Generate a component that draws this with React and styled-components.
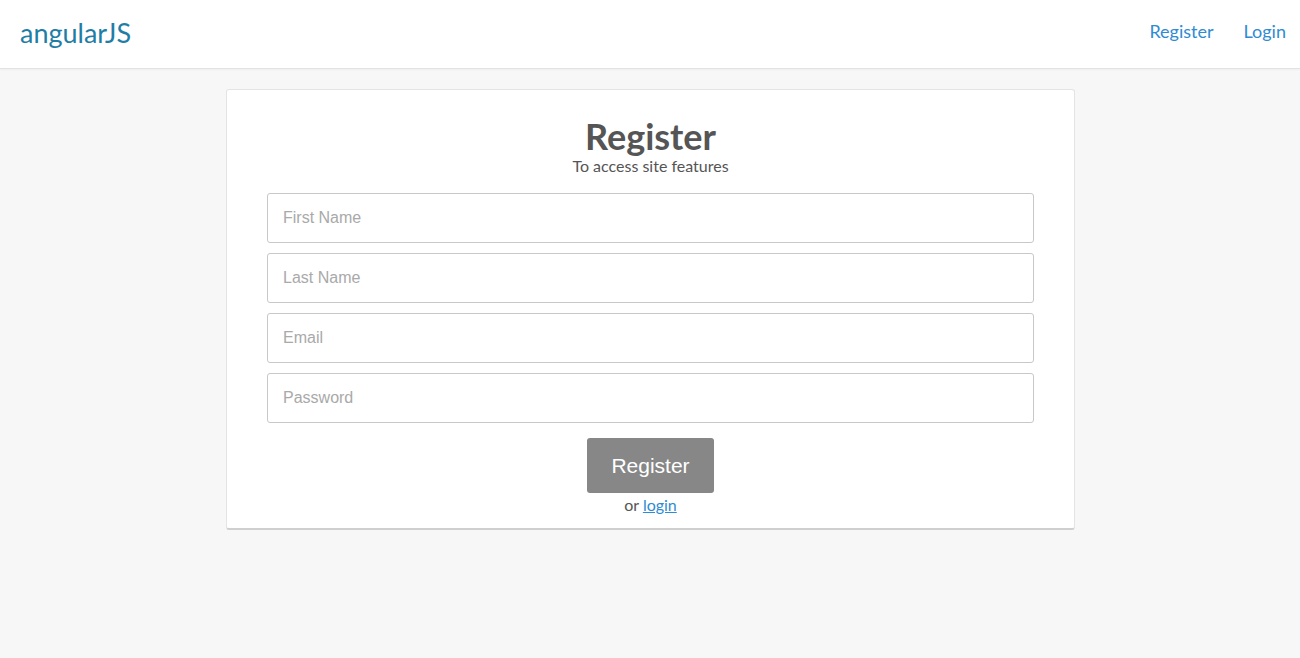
import React from 'react'
import styled, { createGlobalStyle } from 'styled-components'

const GlobalStyle = createGlobalStyle`
  html, body {
    margin: 0;
    padding: 0;
    background: #f7f7f7;
    font-family: Lato, "Open Sans", sans-serif;
    color: #555;
  }
  * { box-sizing: border-box; }
`

const Header = styled.header`
  display: flex;
  align-items: center;
  justify-content: space-between;
  height: 69px;
  padding: 0 14px 0 20px;
  background: #fff;
  border-bottom: 1px solid #e2e2e2;
  box-shadow: 0 1px 2px rgba(0, 0, 0, 0.04);
`

const Brand = styled.a`
  font-size: 27px;
  color: #1f7ea5;
  text-decoration: none;
  line-height: 1;
  margin-top: -4px;
`

const Nav = styled.nav`
  display: flex;
  gap: 30px;
  margin-top: -6px;
`

const NavLink = styled.a`
  font-size: 18px;
  color: #2f8bd2;
  text-decoration: none;
`

const Main = styled.main`
  display: flex;
  justify-content: center;
  padding-top: 20px;
`

const Card = styled.section`
  width: 849px;
  margin-left: 1px;
  background: #fff;
  border: 1px solid #e4e4e4;
  border-bottom: 2px solid #cfcfcf;
  border-radius: 3px;
  padding: 27px 40px 13px;
  text-align: center;
`

const Title = styled.h1`
  margin: 0;
  font-size: 36px;
  line-height: 39px;
  font-weight: 700;
  color: #555;
`

const Subtitle = styled.p`
  margin: 0;
  font-size: 16px;
  line-height: 20px;
  color: #555;
`

const Form = styled.form`
  display: flex;
  flex-direction: column;
  align-items: center;
  gap: 10px;
  margin-top: 17px;
`

const Input = styled.input`
  width: 100%;
  height: 50px;
  padding: 0 15px;
  border: 1px solid #c8c8c8;
  border-radius: 3px;
  font-family: "Liberation Sans", Arial, sans-serif;
  font-size: 16px;
  color: #555;
  outline: none;

  &::placeholder {
    color: #a9a9a9;
  }
`

const Button = styled.button`
  margin-top: 5px;
  width: 127px;
  height: 55px;
  border: none;
  border-radius: 3px;
  background: #878787;
  color: #fff;
  font-family: "Liberation Sans", Arial, sans-serif;
  font-size: 21px;
  cursor: pointer;
`

const Alt = styled.p`
  margin: 2px 0 0;
  font-size: 16px;
  line-height: 20px;
  color: #555;

  a {
    color: #2f8bd2;
    text-decoration: underline;
  }
`

const fields = [
  { name: 'firstName', type: 'text', placeholder: 'First Name' },
  { name: 'lastName', type: 'text', placeholder: 'Last Name' },
  { name: 'email', type: 'email', placeholder: 'Email' },
  { name: 'password', type: 'password', placeholder: 'Password' }
]

export default function App() {
  return (
    <>
      <GlobalStyle />
      <Header>
        <Brand href="#">angularJS</Brand>
        <Nav>
          <NavLink href="#">Register</NavLink>
          <NavLink href="#">Login</NavLink>
        </Nav>
      </Header>
      <Main>
        <Card>
          <Title>Register</Title>
          <Subtitle>To access site features</Subtitle>
          <Form onSubmit={e => e.preventDefault()}>
            {fields.map(f => (
              <Input key={f.name} name={f.name} type={f.type} placeholder={f.placeholder} />
            ))}
            <Button type="submit">Register</Button>
          </Form>
          <Alt>
            or <a href="#">login</a>
          </Alt>
        </Card>
      </Main>
    </>
  )
}
